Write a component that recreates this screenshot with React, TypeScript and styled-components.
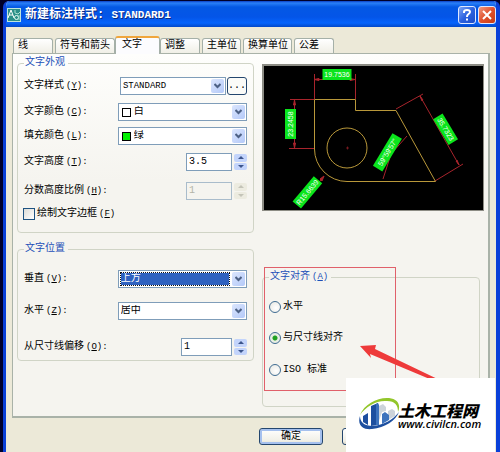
import React from "react";
import styled, { createGlobalStyle, css } from "styled-components";

const GlobalStyle = createGlobalStyle`
  *, *::before, *::after { box-sizing: border-box; }
  body {
    margin: 0;
    background: #00002a;
    color: #000;
    font: 10px/12px "Liberation Mono", "Noto Sans CJK SC", monospace;
  }
  button, input, select { font: inherit; color: inherit; }
`;

const Desktop = styled.div`
  display: flex;
  min-height: 100vh;
  padding: 1px 0 0 3px;
`;

const Window = styled.main`
  position: relative;
  flex: 1;
  min-width: 0;
  display: flex;
  flex-direction: column;
  overflow: hidden;
  background: #ece9d8;
  border: solid #0a40d8;
  border-width: 0 4px 0 3px;
  border-radius: 6px 6px 0 0;
`;

const TitleBar = styled.header`
  display: flex;
  align-items: center;
  gap: 2px;
  height: 26px;
  margin: 0 -3px;
  padding: 2px 3px 0 4px;
  color: #fff;
  background: linear-gradient(#0a3fc4 0, #2a80f8 2px, #0458e4 6px, #0455e8 16px, #0664fc 22px, #0348c8 26px);
`;

const Title = styled.h1`
  flex: 1;
  margin: 0 0 0 2px;
  font: bold 12px/16px "Liberation Mono", "Noto Sans CJK SC", monospace;
  text-shadow: 1px 1px #0a2a80;
  white-space: pre;
`;

const TitleLatin = styled.span`
  font-size: 11px;
`;

const CaptionButton = styled.button<{ $close?: boolean }>`
  display: grid;
  place-items: center;
  width: 18px;
  height: 18px;
  padding: 0;
  border: 1px solid #dfe8ff;
  border-radius: 3px;
  background: ${(p) =>
    p.$close
      ? "linear-gradient(135deg, #f09a80, #e0502c 50%, #c83c14)"
      : "linear-gradient(135deg, #7ca4f4, #2c62e0 50%, #1c4cc8)"};
`;

const TabBar = styled.div`
  display: flex;
  align-items: flex-end;
  gap: 2px;
  height: 26px;
  margin: 0 6px;
  padding-left: 1px;
`;

const Tab = styled.button<{ $w: number; $active?: boolean }>`
  flex: 0 0 ${(p) => p.$w}px;
  height: 15px;
  padding: 0 0 0 4px;
  border: 1px solid #a5b0a8;
  border-bottom: 0;
  border-radius: 3px 3px 0 0;
  background: linear-gradient(#fff, #f0efe6);
  line-height: 14px;
  text-align: left;
  white-space: nowrap;
  ${(p) =>
    p.$active &&
    css`
      z-index: 1;
      height: 18px;
      margin: 0 -2px -1px;
      padding: 0 0 3px 6px;
      border-top: 2px solid #f0a63c;
      background: #fcfcfe;
    `}
`;

const Panel = styled.section`
  display: grid;
  grid-template-columns: 237fr 222fr;
  gap: 8px;
  margin: 0 6px;
  padding: 3px 4px 9px 4px;
  border: 1px solid #a9b2a8;
  border-right-width: 2px;
  border-bottom-width: 2px;
  background: linear-gradient(#fefefc, #f5f4ef 35%, #f5f4ef);
`;

const Column = styled.div`
  display: flex;
  flex-direction: column;
  min-width: 0;
`;

const Group = styled.fieldset<{ $top?: number; $bottom: number; $inset?: boolean }>`
  position: relative;
  min-width: 0;
  margin: ${(p) => p.$top ?? 0}px ${(p) => (p.$inset ? 4 : 0)}px 0 0;
  padding: 0 6px ${(p) => p.$bottom}px;
  border: 1px solid #d0d4c6;
  border-radius: 4px;
`;

const Legend = styled.legend`
  padding: 0 3px 0 1px;
  color: #1c4fb8;
  line-height: 12px;
`;

const Row = styled.div<{ $top: number }>`
  display: flex;
  align-items: center;
  justify-content: space-between;
  height: 18px;
  margin-top: ${(p) => p.$top}px;
  white-space: nowrap;
`;

const Latin = styled.span`
  margin-left: 2px;
  font-size: 9px;
`;

const Pair = styled.div`
  display: flex;
  gap: 1px;
  flex: 0 0 57%;
`;

const Combo = styled.div<{ $fill?: boolean }>`
  display: flex;
  align-items: center;
  gap: 3px;
  flex: ${(p) => (p.$fill ? "1" : "0 0 58%")};
  min-width: 0;
  height: 18px;
  padding: 1px 1px 1px 2px;
  border: 1px solid #7f9db9;
  background: #fff;
`;

const Select = styled.select<{ $focused?: boolean; $latin?: boolean }>`
  flex: 1;
  min-width: 0;
  height: 12px;
  padding: 0;
  border: 0;
  outline: 0;
  appearance: none;
  background: transparent;
  line-height: 12px;
  font-size: ${(p) => (p.$latin ? 9 : 10)}px;
  ${(p) =>
    p.$focused &&
    css`
      color: #fff;
      background: #2f62c0;
      outline: 1px dotted #111;
    `}
`;

const Swatch = styled.span<{ $color: string }>`
  width: 9px;
  height: 9px;
  margin-left: 1px;
  border: 1px solid #000;
  background: ${(p) => p.$color};
`;

const DropMark = styled.span`
  display: grid;
  place-items: center;
  width: 13px;
  height: 14px;
  border-radius: 2px;
  background: linear-gradient(135deg, #dbe6fe, #b4c9f8);
`;

const MoreButton = styled.button`
  width: 20px;
  height: 18px;
  padding: 0;
  border: 1px solid #24466e;
  border-radius: 3px;
  background: #fbfbf8;
  line-height: 14px;
`;

const Spinner = styled.div<{ $w: number }>`
  display: flex;
  gap: 2px;
  width: ${(p) => p.$w}px;
  height: 18px;
`;

const SpinInput = styled.input`
  flex: 1;
  min-width: 0;
  height: 18px;
  padding: 0 2px 2px;
  border: 1px solid #7f9db9;
  background: #fff;
  &:disabled {
    color: #b4b4a8;
    border-color: #a9bccb;
    background: #f5f4ef;
  }
`;

const SpinButtons = styled.div`
  display: grid;
  grid-template-rows: 1fr 1fr;
  gap: 1px;
  width: 13px;
  padding: 1px 0;
`;

const SpinButton = styled.button`
  display: grid;
  place-items: center;
  padding: 0;
  border: 0;
  border-radius: 2px;
  color: #3c558c;
  background: #c3d4fb;
  &:disabled {
    color: #c4c4b8;
    background: #ecebe0;
  }
`;

const CheckLabel = styled.label`
  display: flex;
  align-items: center;
  gap: 2px;
`;

const Checkbox = styled.input`
  width: 12px;
  height: 12px;
  margin: 0 0 0 -1px;
  appearance: none;
  border: 1px solid #1d5281;
  background: linear-gradient(135deg, #dcdcd7, #fff);
  &:checked {
    background: #21a121;
  }
`;

const Radio = styled.input`
  width: 12px;
  height: 12px;
  margin: 0;
  appearance: none;
  border: 1px solid #3f6c92;
  border-radius: 50%;
  background: radial-gradient(circle at 60% 60%, #fff, #e6e6e0);
  &:checked {
    background: radial-gradient(circle, #21a121 0 2px, #e8eee4 3px);
  }
`;

const Preview = styled.div`
  margin-top: 7px;
  border: solid #8c8c84;
  border-width: 2px 1px 1px 2px;
  background: #000;
  svg {
    display: block;
    width: 100%;
    height: 144px;
  }
`;

const HighlightFrame = styled.div`
  position: absolute;
  top: -16px;
  bottom: 15px;
  left: 1px;
  width: 132px;
  border: 1px solid #e0606a;
  pointer-events: none;
`;

const PointerArrow = styled.svg`
  position: absolute;
  top: 62px;
  left: 97px;
  pointer-events: none;
`;

const Footer = styled.footer`
  display: flex;
  justify-content: flex-end;
  gap: 19px;
  padding: 10px 7px 6px;
`;

const PushButton = styled.button<{ $primary?: boolean }>`
  width: 64px;
  height: 17px;
  padding: 0;
  border: 1px solid #24466e;
  border-radius: 3px;
  background: linear-gradient(#fff, #f0efe6 80%, #dcd8c8);
  line-height: 14px;
  ${(p) => p.$primary && "box-shadow: inset 0 0 0 2px #a5c0ee;"}
`;

const SiteBadge = styled.aside`
  position: absolute;
  right: 1px;
  bottom: 0;
  display: flex;
  align-items: center;
  width: 149px;
  height: 74px;
  padding: 0 0 2px 12px;
  background: #fff;
`;

const BadgeText = styled.div`
  display: flex;
  flex-direction: column;
  margin: 4px 0 0 -2px;
  white-space: nowrap;
`;

const BadgeName = styled.strong`
  font: italic 900 16px/16px "Noto Sans CJK SC", sans-serif;
`;

const BadgeUrl = styled.span`
  font: italic 600 11px/12px "Open Sans", sans-serif;
`;

const Chevron = () => (
  <DropMark>
    <svg width="7" height="6" viewBox="0 0 7 6" aria-hidden="true">
      <path d="M.5 1 3.5 4 6.500 1" fill="none" stroke="#4d6185" strokeWidth="2" />
    </svg>
  </DropMark>
);

type CaptionProps = { id?: string; text: string; hotkey: string; colon?: boolean };

const Caption = ({ text, hotkey, colon }: CaptionProps) => (
  <>
    {text}
    <Latin>
      (<u>{hotkey}</u>){colon ? ":" : ""}
    </Latin>
  </>
);

const FieldLabel = ({ id, text, hotkey }: CaptionProps) => (
  <label htmlFor={id}>
    <Caption text={text} hotkey={hotkey} colon />
  </label>
);

type DropDownProps = {
  id: string;
  value: string;
  swatch?: string;
  focused?: boolean;
  latin?: boolean;
  fill?: boolean;
};

const DropDown = ({ id, value, swatch, focused, latin, fill }: DropDownProps) => (
  <Combo $fill={fill}>
    {swatch && <Swatch $color={swatch} />}
    <Select id={id} $focused={focused} $latin={latin}>
      <option>{value}</option>
    </Select>
    <Chevron />
  </Combo>
);

type SpinProps = { id: string; value: string; width: number; disabled?: boolean };

const Spin = ({ id, value, width, disabled }: SpinProps) => (
  <Spinner $w={width}>
    <SpinInput id={id} defaultValue={value} disabled={disabled} />
    <SpinButtons>
      {["M0 4 3 1 6 4z", "M0 1 3 4 6 1z"].map((d, i) => (
        <SpinButton key={d} type="button" disabled={disabled} aria-label={i ? "减小" : "增大"}>
          <svg width="6" height="5" viewBox="0 0 6 5">
            <path d={d} fill="currentColor" />
          </svg>
        </SpinButton>
      ))}
    </SpinButtons>
  </Spinner>
);

const DIMENSIONS = [
  { text: "19.7536", x: 73, y: 8, angle: 0, w: 29 },
  { text: "23.2458", x: 26, y: 58, angle: -90, w: 30 },
  { text: "35.7323", x: 182, y: 63, angle: 59, w: 30 },
  { text: "59°59'57\"", x: 123, y: 86, angle: -59, w: 38 },
  { text: "R15.6639", x: 43, y: 126, angle: -50, w: 33 },
];

const Drawing = () => (
  <svg viewBox="0 0 219 144" role="img" aria-label="标注预览">
    <g fill="none" stroke="#a8242c">
      <path d="M50.500 8v25M91.500 8v25M50 13.500h41M26 33.500h24M25 82.500h25M30.500 34v48" />
      <path d="M132 43 159 28M156 30 195 99M171 115 199 98M143 70 127 88 119 113M60 110 35 141" />
      <path d="M50 13.500l5-1v2zM91 13.500l-5-1v2zM30.500 34l-1 5h2zM30.500 82l-1-5h2zM156 30l2 5 1-1zM195 99l-3-4 1-1zM60 110l-4 3 2 2z" fill="#a8242c" />
    </g>
    <g fill="none" stroke="#b9983a">
      <path d="M50.500 33.500H91.500V44.500H132L171.500 115.500H83A32.500 32.500 0 0 1 50.500 83z" />
      <circle cx="83" cy="82" r="20" />
    </g>
    <path d="M82 82h3M83.500 80.500v3" stroke="#a8242c" strokeWidth=".6" />
    {DIMENSIONS.map((d) => (
      <g key={d.text} transform={`translate(${d.x} ${d.y}) rotate(${d.angle})`}>
        <rect x={-d.w / 2} y="-5" width={d.w} height="11" fill="#0be51c" />
        <text y="3" textAnchor="middle" fill="#fff" fontFamily="Liberation Sans, sans-serif" fontSize="7">
          {d.text}
        </text>
      </g>
    ))}
  </svg>
);

const TABS = [
  { name: "线", w: 40 },
  { name: "符号和箭头", w: 60 },
  { name: "文字", w: 45 },
  { name: "调整", w: 40 },
  { name: "主单位", w: 39 },
  { name: "换算单位", w: 49 },
  { name: "公差", w: 40 },
];

export default function App() {
  return (
    <>
      <GlobalStyle />
      <Desktop>
        <Window>
          <TitleBar>
            <svg width="14" height="14" viewBox="0 0 14 14" aria-hidden="true">
              <path d="M0 0h14v14H0z" fill="#bfe4dc" />
              <path d="M1 1h12v12H1z" fill="#2b8f88" />
              <path d="M1 10 4 2l3 8M2 7h4" fill="none" stroke="#fff" />
              <circle cx="9.500" cy="9.500" r="2" fill="none" stroke="#e8fff8" />
              <path d="M8 2v3l3 1 2-2M12 7v5" fill="none" stroke="#a9ded0" />
            </svg>
            <Title>
              新建标注样式: <TitleLatin>STANDARD1</TitleLatin>
            </Title>
            <CaptionButton type="button" aria-label="帮助">
              <svg width="12" height="14" viewBox="0 0 12 14">
                <path d="M3 5V4q0-2 3-2t3 2q0 1-2 2.500-1 .8-1 2.500M6 10.500v2" fill="none" stroke="#fff" strokeWidth="2" />
              </svg>
            </CaptionButton>
            <CaptionButton type="button" $close aria-label="关闭">
              <svg width="12" height="12" viewBox="0 0 12 12">
                <path d="M2 2 10 10M10 2 2 10" stroke="#fff" strokeWidth="2" />
              </svg>
            </CaptionButton>
          </TitleBar>
          <TabBar role="tablist">
            {TABS.map((t) => (
              <Tab key={t.name} type="button" role="tab" $w={t.w} $active={t.name === "文字"} aria-selected={t.name === "文字"}>
                {t.name}
              </Tab>
            ))}
          </TabBar>
          <Panel>
            <Column>
              <Group $bottom={9}>
                <Legend>文字外观</Legend>
                <Row $top={8}>
                  <FieldLabel id="style" text="文字样式" hotkey="Y" />
                  <Pair>
                    <DropDown id="style" value="STANDARD" latin fill />
                    <MoreButton type="button">...</MoreButton>
                  </Pair>
                </Row>
                <Row $top={8}>
                  <FieldLabel id="color" text="文字颜色" hotkey="C" />
                  <DropDown id="color" value="白" swatch="#fff" />
                </Row>
                <Row $top={6}>
                  <FieldLabel id="fill" text="填充颜色" hotkey="L" />
                  <DropDown id="fill" value="绿" swatch="#00f000" />
                </Row>
                <Row $top={8}>
                  <FieldLabel id="height" text="文字高度" hotkey="T" />
                  <Spin id="height" value="3.5" width={61} />
                </Row>
                <Row $top={11}>
                  <FieldLabel id="scale" text="分数高度比例" hotkey="H" />
                  <Spin id="scale" value="1" width={61} disabled />
                </Row>
                <Row $top={5}>
                  <CheckLabel>
                    <Checkbox type="checkbox" />
                    <span>
                      <Caption text="绘制文字边框" hotkey="F" />
                    </span>
                  </CheckLabel>
                </Row>
              </Group>
              <Group $top={10} $bottom={4}>
                <Legend>文字位置</Legend>
                <Row $top={15}>
                  <FieldLabel id="vertical" text="垂直" hotkey="V" />
                  <DropDown id="vertical" value="上方" focused />
                </Row>
                <Row $top={14}>
                  <FieldLabel id="horizontal" text="水平" hotkey="Z" />
                  <DropDown id="horizontal" value="居中" />
                </Row>
                <Row $top={18}>
                  <FieldLabel id="offset" text="从尺寸线偏移" hotkey="O" />
                  <Spin id="offset" value="1" width={66} />
                </Row>
              </Group>
            </Column>
            <Column>
              <Preview>
                <Drawing />
              </Preview>
              <Group $top={60} $bottom={27} $inset>
                <Legend>
                  <Caption text="文字对齐" hotkey="A" />
                </Legend>
                <Row $top={15}>
                  <CheckLabel>
                    <Radio type="radio" name="align" />
                    水平
                  </CheckLabel>
                </Row>
                <Row $top={13}>
                  <CheckLabel>
                    <Radio type="radio" name="align" defaultChecked />
                    与尺寸线对齐
                  </CheckLabel>
                </Row>
                <Row $top={14}>
                  <CheckLabel>
                    <Radio type="radio" name="align" />
                    ISO 标准
                  </CheckLabel>
                </Row>
                <HighlightFrame />
                <PointerArrow width="90" height="42" viewBox="0 0 90 42" aria-hidden="true">
                  <path d="M0 1 16 0 15 4 90 40 84 40 10 9 11 13z" fill="#ee3a3a" />
                </PointerArrow>
              </Group>
            </Column>
          </Panel>
          <Footer>
            <PushButton type="button" $primary>
              确定
            </PushButton>
            <PushButton type="button" aria-label="取消" />
            <PushButton type="button" aria-label="帮助" />
          </Footer>
          <SiteBadge>
            <svg width="42" height="34" viewBox="0 0 42 34" aria-hidden="true">
              <path d="M2 18C6 7 20 0 31 1c9 1 12 7 9 14 0-7-3-11-11-11C19 3 8 9 2 18z" fill="#93c62b" />
              <path d="M21 9 25 7 28 10V14L24 15 21 24zM30 14 34 12 37 14V19L30 23z" fill="#ccd3da" />
              <path d="M5 19 10 16V28L5 25zM13 9 20 6V28L13 29z" fill="#1d4f9f" />
              <path d="M18 7 20 6 21 8V28L18 28zM24 17 27 15 31 18V23L24 27z" fill="#3d73bd" />
              <path d="M2 19C-1 28 5 33 14 32c13-1 24-9 27-17-6 8-16 13-26 14C6 29 2 25 2 19z" fill="#1d4f9f" />
            </svg>
            <BadgeText>
              <BadgeName>土木工程网</BadgeName>
              <BadgeUrl>www.civilcn.com</BadgeUrl>
            </BadgeText>
          </SiteBadge>
        </Window>
      </Desktop>
    </>
  );
}
